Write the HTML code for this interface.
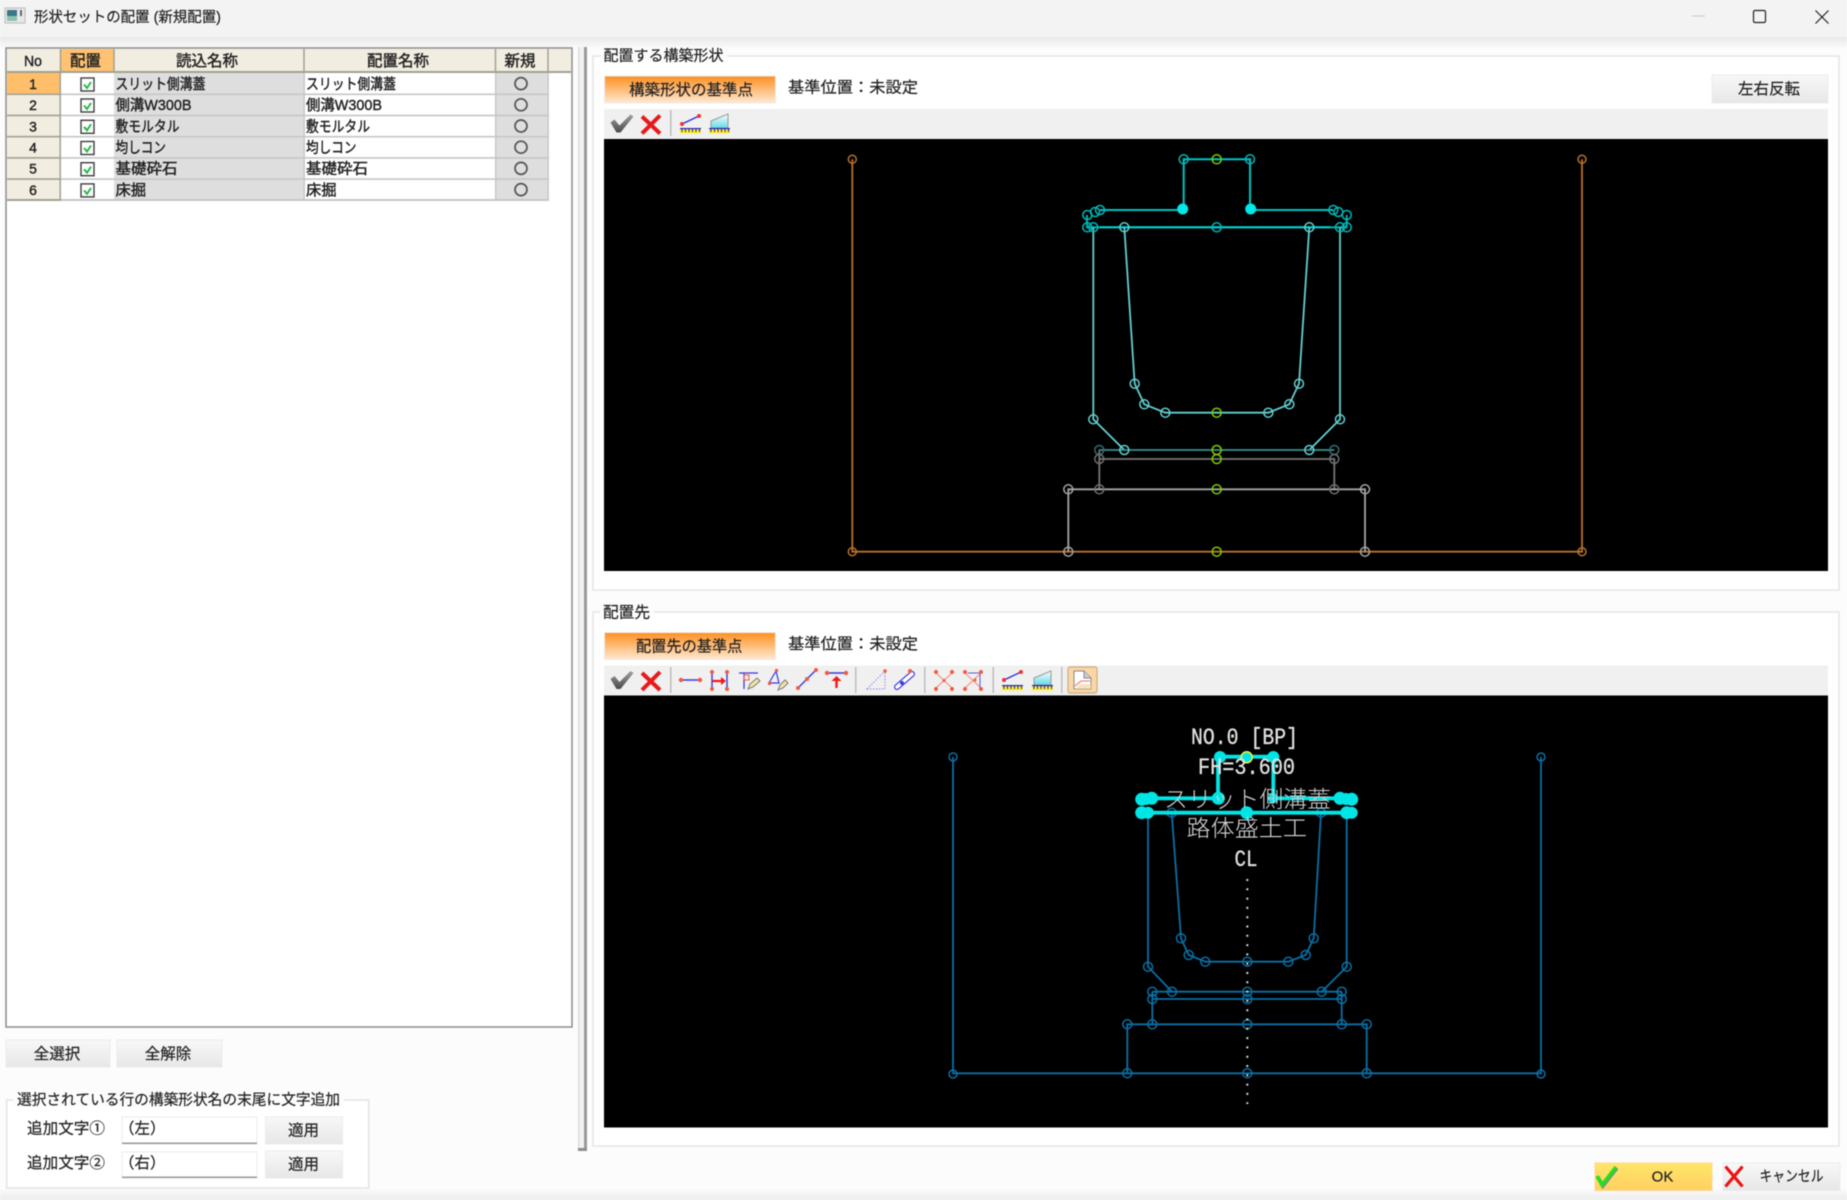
<!DOCTYPE html>
<html lang="ja">
<head>
<meta charset="utf-8">
<title>形状セットの配置 (新規配置)</title>
<style>
html,body{margin:0;padding:0;width:1847px;height:1200px;overflow:hidden;background:#fcfcfc}
svg{display:block;filter:blur(.5px)}
text{font-family:"Liberation Sans","Noto Sans CJK JP",sans-serif;fill:#222;stroke:#222;stroke-width:.2}
.c{text-anchor:middle}
.b text{stroke-width:.4}
.cad text{font-family:"Liberation Mono","Noto Sans CJK JP",monospace;fill:#e2e2e2;stroke:#e2e2e2;stroke-width:.3;font-size:23px}
.cad text.j{stroke:none;font-weight:300}
.n circle{fill:none;stroke-width:1.5}
</style>
</head>
<body>
<svg width="1847" height="1200" viewBox="0 0 1847 1200" xmlns="http://www.w3.org/2000/svg">
<defs>
<linearGradient id="sh" x1="0" y1="0" x2="0" y2="1"><stop offset="0" stop-color="#e9e9e9"/><stop offset="1" stop-color="#fcfcfc"/></linearGradient>
<linearGradient id="bt" x1="0" y1="0" x2="0" y2="1"><stop offset="0" stop-color="#fcfcfc"/><stop offset="1" stop-color="#ececec"/></linearGradient>
<linearGradient id="or" x1="0" y1="0" x2="0" y2="1"><stop offset="0" stop-color="#ff8f1f"/><stop offset="1" stop-color="#ffe9d2"/></linearGradient>
<linearGradient id="gb" x1="0" y1="0" x2="0" y2="1"><stop offset="0" stop-color="#f8f8f8"/><stop offset="1" stop-color="#e7e7e7"/></linearGradient>
<linearGradient id="ok" x1="0" y1="0" x2="0" y2="1"><stop offset="0" stop-color="#ffe668"/><stop offset="1" stop-color="#ffcf62"/></linearGradient>
<linearGradient id="gc" x1="0" y1="0" x2="0" y2="1"><stop offset="0" stop-color="#a0a0a0"/><stop offset="1" stop-color="#4a4a4a"/></linearGradient>
<linearGradient id="sl" x1="0" y1="0" x2="0" y2="1"><stop offset="0" stop-color="#ffffff"/><stop offset="1" stop-color="#63dbe8"/></linearGradient>
</defs>

<!-- background / title -->
<rect width="1847" height="1200" fill="#fcfcfc"/>
<rect width="1847" height="37" fill="#f3f3f3"/>
<rect y="37" width="1847" height="12" fill="url(#sh)"/>
<rect y="1188" width="1847" height="12" fill="url(#bt)"/>
<rect x="5" y="8" width="20" height="15" fill="#e8e8e8" stroke="#bbb"/>
<rect x="7" y="10" width="10" height="11" fill="#3a7888"/>
<rect x="7" y="16" width="10" height="5" fill="#8cc0b0"/>
<rect x="20" y="10" width="2" height="6" fill="#666"/>
<text x="34" y="22" font-size="14.5" textLength="187" lengthAdjust="spacingAndGlyphs">形状セットの配置 (新規配置)</text>
<line x1="1692" y1="16" x2="1705" y2="16" stroke="#c8c8c8" stroke-width="1"/>
<rect x="1753.5" y="10.5" width="12" height="12" rx="1.5" fill="none" stroke="#222" stroke-width="1.2"/>
<path d="M1815.5 10.5L1828.5 23.5M1828.5 10.5L1815.5 23.5" stroke="#222" stroke-width="1.2" fill="none"/>

<!-- table -->
<rect x="6" y="48" width="566" height="979" fill="#fff" stroke="#8c8c8c" stroke-width="1.5"/>
<rect x="7" y="49" width="564" height="23" fill="#f1ede1"/>
<rect x="60.5" y="49" width="53" height="23" fill="#ffc272"/>
<rect x="7" y="71" width="564" height="2" fill="#a3a191"/>
<g stroke="#a3a191" stroke-width="1.5"><line x1="60.5" y1="49" x2="60.5" y2="72"/><line x1="114" y1="49" x2="114" y2="72"/><line x1="304" y1="49" x2="304" y2="72"/><line x1="495.5" y1="49" x2="495.5" y2="72"/><line x1="548" y1="49" x2="548" y2="72"/></g>
<g class="b">
<text x="33" y="66" font-size="14.5" class="c" textLength="18" lengthAdjust="spacingAndGlyphs">No</text>
<text x="85.500" y="66" font-size="15.5" class="c">配置</text>
<text x="207" y="66" font-size="15.5" class="c">読込名称</text>
<text x="398" y="66" font-size="15.5" class="c">配置名称</text>
<text x="520" y="66" font-size="15.5" class="c">新規</text>
</g>

<!-- rows -->
<rect x="7" y="73" width="53" height="127" fill="#f1ede1"/>
<rect x="7" y="73" width="53" height="21" fill="#ffbe6a"/>
<rect x="114" y="73" width="190" height="127" fill="#dedede"/>
<rect x="496" y="73" width="52" height="127" fill="#dedede"/>
<g fill="#c6c6c6">
<rect x="7" y="93.5" width="541" height="1.6"/><rect x="7" y="114.7" width="541" height="1.6"/><rect x="7" y="135.9" width="541" height="1.6"/><rect x="7" y="157.1" width="541" height="1.6"/><rect x="7" y="178.3" width="541" height="1.6"/><rect x="7" y="199" width="541" height="2"/>
<rect x="303.5" y="73" width="1.4" height="127"/><rect x="495" y="73" width="1.4" height="127"/><rect x="547.5" y="73" width="1.4" height="128"/>
</g>
<rect x="59.5" y="73" width="1.5" height="128" fill="#a3a191"/>
<rect x="7" y="199" width="53" height="2" fill="#a3a191"/>
<rect x="7" y="93.5" width="53" height="1.5" fill="#a3a191"/><rect x="7" y="114.7" width="53" height="1.5" fill="#a3a191"/><rect x="7" y="135.9" width="53" height="1.5" fill="#a3a191"/><rect x="7" y="157.1" width="53" height="1.5" fill="#a3a191"/><rect x="7" y="178.3" width="53" height="1.5" fill="#a3a191"/>

<g class="b">
<text x="33" y="89" class="c" font-size="14">1</text><text x="33" y="110" class="c" font-size="14">2</text><text x="33" y="131.5" class="c" font-size="14">3</text><text x="33" y="152.5" class="c" font-size="14">4</text><text x="33" y="173.5" class="c" font-size="14">5</text><text x="33" y="195" class="c" font-size="14">6</text>
</g>
<g fill="#fff" stroke="#3c3c3c" stroke-width="1.4">
<rect x="81" y="78" width="13" height="13"/><rect x="81" y="99" width="13" height="13"/><rect x="81" y="120.3" width="13" height="13"/><rect x="81" y="141.5" width="13" height="13"/><rect x="81" y="162.7" width="13" height="13"/><rect x="81" y="183.9" width="13" height="13"/>
</g>
<g fill="none" stroke="#28b84a" stroke-width="2">
<path d="M84 84.5l3 3.5l4-6"/><path d="M84 105.5l3 3.5l4-6"/><path d="M84 126.8l3 3.5l4-6"/><path d="M84 148l3 3.5l4-6"/><path d="M84 169.2l3 3.5l4-6"/><path d="M84 190.4l3 3.5l4-6"/>
</g>
<g fill="none" stroke="#555" stroke-width="1.7">
<circle cx="521" cy="83.6" r="6"/><circle cx="521" cy="104.8" r="6"/><circle cx="521" cy="126" r="6"/><circle cx="521" cy="147.2" r="6"/><circle cx="521" cy="168.4" r="6"/><circle cx="521" cy="189.6" r="6"/>
</g>
<g font-size="14.8" class="b">
<text x="115.500" y="89" textLength="90" lengthAdjust="spacingAndGlyphs">スリット側溝蓋</text>
<text x="115.500" y="110" textLength="76" lengthAdjust="spacingAndGlyphs">側溝W300B</text>
<text x="115.500" y="131.5" textLength="64" lengthAdjust="spacingAndGlyphs">敷モルタル</text>
<text x="115.500" y="152.5" textLength="50.5" lengthAdjust="spacingAndGlyphs">均しコン</text>
<text x="115.500" y="173.5" textLength="62" lengthAdjust="spacingAndGlyphs">基礎砕石</text>
<text x="115.500" y="195" textLength="30.6" lengthAdjust="spacingAndGlyphs">床掘</text>
<text x="306" y="89" textLength="90" lengthAdjust="spacingAndGlyphs">スリット側溝蓋</text>
<text x="306" y="110" textLength="76" lengthAdjust="spacingAndGlyphs">側溝W300B</text>
<text x="306" y="131.5" textLength="64" lengthAdjust="spacingAndGlyphs">敷モルタル</text>
<text x="306" y="152.5" textLength="50.5" lengthAdjust="spacingAndGlyphs">均しコン</text>
<text x="306" y="173.5" textLength="62" lengthAdjust="spacingAndGlyphs">基礎砕石</text>
<text x="306" y="195" textLength="30.6" lengthAdjust="spacingAndGlyphs">床掘</text>
</g>

<!-- bottom-left controls -->
<rect x="6" y="1040" width="104" height="27" fill="url(#gb)" stroke="#ececec"/>
<rect x="117" y="1040" width="105" height="27" fill="url(#gb)" stroke="#ececec"/>
<text x="57" y="1059" font-size="15.5" class="c">全選択</text>
<text x="168" y="1059" font-size="15.5" class="c">全解除</text>
<rect x="6.7" y="1100" width="362" height="88" fill="#fff" stroke="#e2e2e2" stroke-width="1.4"/>
<rect x="13" y="1092" width="331" height="14" fill="#fcfcfc"/>
<text x="17" y="1104.5" font-size="14.7" textLength="323" lengthAdjust="spacingAndGlyphs">選択されている行の構築形状名の末尾に文字追加</text>
<text x="27" y="1133.5" font-size="15.5" textLength="78" lengthAdjust="spacingAndGlyphs">追加文字①</text>
<text x="27" y="1168" font-size="15.5" textLength="78" lengthAdjust="spacingAndGlyphs">追加文字②</text>
<rect x="122" y="1117" width="135" height="27" fill="#fff" stroke="#ededed"/>
<rect x="122" y="1142.5" width="135" height="1.5" fill="#999"/>
<rect x="122" y="1152" width="135" height="26" fill="#fff" stroke="#ededed"/>
<rect x="122" y="1176.5" width="135" height="1.5" fill="#999"/>
<text x="119" y="1133.5" font-size="15.5">（左）</text>
<text x="119" y="1168" font-size="15.5">（右）</text>
<rect x="265.500" y="1117" width="77" height="27" fill="url(#gb)" stroke="#ececec"/>
<rect x="265.500" y="1151" width="77" height="27" fill="url(#gb)" stroke="#ececec"/>
<text x="303.5" y="1135.5" font-size="15.5" class="c">適用</text>
<text x="303.5" y="1169.5" font-size="15.5" class="c">適用</text>

<!-- splitter -->
<rect x="578" y="47" width="1.5" height="1103" fill="#dcdcdc"/>
<rect x="579.5" y="47" width="5" height="1101" fill="#f2f2f2"/>
<rect x="584" y="47" width="3" height="1104" fill="#9a9a9a"/>
<rect x="578" y="1148" width="9" height="3" fill="#8e8e8e"/>

<!-- upper panel -->
<rect x="593" y="56" width="1246" height="534" fill="#fff" stroke="#e6e6e6" stroke-width="1.6"/>
<rect x="601" y="48" width="126" height="14" fill="#fcfcfc"/>
<text x="603.500" y="60.5" font-size="15" textLength="120" lengthAdjust="spacingAndGlyphs">配置する構築形状</text>
<rect x="604.500" y="76" width="171" height="27" fill="url(#or)" stroke="#ececec"/>
<text x="629" y="95" font-size="15.2" textLength="124" lengthAdjust="spacingAndGlyphs">構築形状の基準点</text>
<text x="788" y="92.5" font-size="15.5" textLength="130" lengthAdjust="spacingAndGlyphs">基準位置：未設定</text>
<rect x="1712" y="75" width="116" height="28" fill="url(#gb)" stroke="#ececec"/>
<text x="1769" y="94" font-size="15.5" class="c">左右反転</text>
<rect x="604" y="109" width="1224" height="30" fill="#f0f0f0"/>
<rect x="604" y="139" width="1224" height="432" fill="#000"/>

<!-- lower panel -->
<rect x="593" y="612" width="1246" height="534" fill="#fff" stroke="#e6e6e6" stroke-width="1.6"/>
<rect x="600" y="604" width="54" height="14" fill="#fcfcfc"/>
<text x="603" y="617.5" font-size="15.5" textLength="47" lengthAdjust="spacingAndGlyphs">配置先</text>
<rect x="604.500" y="632.5" width="171" height="27" fill="url(#or)" stroke="#ececec"/>
<text x="636" y="651.5" font-size="15.2">配置先の基準点</text>
<text x="788" y="649" font-size="15.5" textLength="130" lengthAdjust="spacingAndGlyphs">基準位置：未設定</text>
<rect x="604" y="665.5" width="1224" height="30" fill="#f0f0f0"/>
<rect x="604" y="695.5" width="1224" height="432" fill="#000"/>

<!-- OK / cancel -->
<rect x="1595" y="1163" width="117" height="27.500" fill="url(#ok)" stroke="#ffd79a"/>
<path d="M1597 1176l5 9l14-18" fill="none" stroke="#888" stroke-width="3.5" transform="translate(1 1)"/>
<path d="M1597 1176l5 9l14-18" fill="none" stroke="#22e022" stroke-width="3.5"/>
<text x="1662.500" y="1181.5" font-size="15" class="c">OK</text>
<rect x="1723" y="1163" width="117" height="27.500" fill="url(#gb)" stroke="#ececec"/>
<path d="M1725.500 1166.500l17 20M1742.500 1166.500l-17 20" stroke="#ee1111" stroke-width="3.2" fill="none"/>
<text x="1759.500" y="1181" font-size="15" textLength="64" lengthAdjust="spacingAndGlyphs">キャンセル</text>

<!-- Upper toolbar icons -->
<polygon points="610.500,122.500 614.500,119.500 619.500,125.500 630.500,114.500 633.500,116.500 620.500,132.500 616.500,132.500" fill="url(#gc)"/>
<path d="M642 116.500l18 17M660 115.500l-18 18" stroke="#e61a1a" stroke-width="4" fill="none"/>
<rect x="670" y="110" width="1.5" height="26" fill="#bdbdbd"/>
<path d="M682 124L699 116" stroke="#2a2ae0" stroke-width="1.3"/>
<circle cx="682" cy="124" r="2" fill="#f03030"/><circle cx="699" cy="116" r="2" fill="#f03030"/>
<rect x="680" y="128" width="21" height="1.3" fill="#2222cc"/>
<rect x="680" y="129.3" width="21" height="4" fill="#ffee22"/>
<path d="M682 129v3M685.500 129v3M689 129v3M692.500 129v3M696 129v3M699.500 129v3" stroke="#2222aa" stroke-width="1"/>
<polygon points="711,121 728,114 728,128 711,128" fill="url(#sl)" stroke="#999"/>
<rect x="709" y="128" width="21" height="1.3" fill="#2222cc"/>
<rect x="709" y="129.3" width="21" height="4" fill="#ffee22"/>
<path d="M711 129v3M714.500 129v3M718 129v3M721.500 129v3M725 129v3M728.500 129v3" stroke="#2222aa" stroke-width="1"/>

<!-- Lower toolbar icons -->
<polygon points="610.500,679 614.500,676 619.500,682 630.500,671 633.500,673 620.500,689 616.500,689" fill="url(#gc)"/>
<path d="M642 673l18 17M660 672l-18 18" stroke="#e61a1a" stroke-width="4" fill="none"/>
<rect x="670" y="667" width="1.5" height="26" fill="#bdbdbd"/>
<!-- line -->
<path d="M681 680H700" stroke="#3a3ae0" stroke-width="1.4"/><circle cx="681" cy="680" r="2.200" fill="#f25a40"/><circle cx="700" cy="680" r="2.200" fill="#f25a40"/>
<!-- H arrow -->
<path d="M712 672V689M727 672V689" stroke="#3a3ae0" stroke-width="1.4"/>
<path d="M712 681H723" stroke="#f01818" stroke-width="2.200"/><path d="M721 677l5 4l-5 4z" fill="#f01818"/>
<circle cx="712" cy="672" r="2" fill="#f25a40"/><circle cx="712" cy="689" r="2" fill="#f25a40"/><circle cx="727" cy="672" r="2" fill="#f25a40"/><circle cx="727" cy="689" r="2" fill="#f25a40"/>
<!-- T pencil -->
<path d="M739 673H758M744 673V689" stroke="#3a3ae0" stroke-width="1.3" fill="none"/><rect x="744" y="675" width="5" height="5" fill="none" stroke="#f25a40"/>
<path d="M748 689l2-5l7-6l3 3l-7 6z" fill="#f4e3a8" stroke="#777"/>
<!-- triangle pencil -->
<path d="M776 671L769 683H779z" fill="none" stroke="#3a3ae0" stroke-width="1.2"/><rect x="775" y="669" width="3" height="3" fill="#f25a40"/><rect x="768" y="682" width="3" height="3" fill="#f25a40"/>
<path d="M778 690l2-5l5-5l3 3l-5 5z" fill="#f4e3a8" stroke="#777"/>
<!-- diagonal -->
<path d="M798 688L816 670" stroke="#3a3ae0" stroke-width="1.400"/><circle cx="798" cy="688" r="2" fill="#f25a40"/><circle cx="807" cy="679" r="2" fill="#f25a40"/><circle cx="816" cy="670" r="2" fill="#f25a40"/>
<!-- arrow up -->
<path d="M827 673H846" stroke="#3a3ae0" stroke-width="1.4"/><circle cx="827" cy="673" r="2.200" fill="#f25a40"/><circle cx="846" cy="673" r="2.200" fill="#f25a40"/>
<path d="M836.500 688V680" stroke="#f01818" stroke-width="2.400"/><path d="M831.500 681l5-5l5 5z" fill="#f01818"/>
<rect x="855" y="667" width="1.5" height="26" fill="#bdbdbd"/>
<!-- dotted triangle -->
<path d="M867 689H885V671z" fill="none" stroke="#8a8ae8" stroke-width="1" stroke-dasharray="1.500 1.500"/><circle cx="885" cy="671" r="1.800" fill="#f25a40"/>
<!-- capsule -->
<path d="M897 687L912 674" stroke="#3a3ae0" stroke-width="6" stroke-linecap="round"/><path d="M897 687L912 674" stroke="#fff" stroke-width="3.600" stroke-linecap="round"/><circle cx="902" cy="683" r="2" fill="#3a3ae0"/><circle cx="910" cy="671" r="2" fill="#f25a40"/>
<rect x="924" y="667" width="1.5" height="26" fill="#bdbdbd"/>
<!-- X points -->
<path d="M936 673L952 688M952 673L936 688" stroke="#f58a7a" stroke-width="1.1"/><g fill="#f25a40"><circle cx="936" cy="672" r="2"/><circle cx="952" cy="672" r="2"/><circle cx="936" cy="689" r="2"/><circle cx="952" cy="689" r="2"/><circle cx="944" cy="680.500" r="1.500"/></g>
<path d="M965 673L981 688M981 673L965 688" stroke="#f58a7a" stroke-width="1.1"/><path d="M968 673H980V688" fill="none" stroke="#5a5ae0" stroke-width="1"/><g fill="#f25a40"><circle cx="965" cy="672" r="2"/><circle cx="981" cy="672" r="2"/><circle cx="965" cy="689" r="2"/><circle cx="981" cy="689" r="2"/><circle cx="975" cy="680" r="1.500"/></g>
<rect x="992.500" y="667" width="1.5" height="26" fill="#bdbdbd"/>
<!-- ground icons -->
<path d="M1004 680L1021 672" stroke="#2a2ae0" stroke-width="1.3"/><circle cx="1004" cy="680" r="2" fill="#f03030"/><circle cx="1021" cy="672" r="2" fill="#f03030"/>
<rect x="1002" y="685" width="21" height="1.3" fill="#2222cc"/><rect x="1002" y="686.300" width="21" height="4" fill="#ffee22"/>
<path d="M1004 686v3M1007.500 686v3M1011 686v3M1014.500 686v3M1018 686v3M1021.500 686v3" stroke="#2222aa" stroke-width="1"/>
<polygon points="1034,678 1051,671 1051,685 1034,685" fill="url(#sl)" stroke="#999"/>
<rect x="1032" y="685" width="21" height="1.3" fill="#2222cc"/><rect x="1032" y="686.300" width="21" height="4" fill="#ffee22"/>
<path d="M1034 686v3M1037.500 686v3M1041 686v3M1044.500 686v3M1048 686v3M1051.500 686v3" stroke="#2222aa" stroke-width="1"/>
<rect x="1061" y="667" width="1.5" height="26" fill="#bdbdbd"/>
<!-- doc button -->
<rect x="1068" y="667" width="29" height="26" rx="2" fill="#fbd7a5" stroke="#d0b48e" stroke-width="1.400"/>
<path d="M1074 671H1084L1091 678V689H1074z" fill="#fff" stroke="#888"/>
<path d="M1084 671V678H1091" fill="#ccd" stroke="#888"/>
<path d="M1075 686L1081 681H1090" fill="none" stroke="#ee8a7a" stroke-width="1.300"/>
<path d="M1075 689L1080 684H1091V689z" fill="#f6d9b0" opacity=".8"/>

<!-- Upper CAD drawing -->
<g fill="none" stroke-width="1.800">
<path d="M852.300 159.300V551.700H1582V159.300" stroke="#b8722c"/>
<path d="M1100 210H1183M1183.700 210V159.300H1250V210M1250 210H1333" stroke="#00c4c4" stroke-width="2"/>
<path d="M1087 215V227.300H1346.700V215" stroke="#00bcbc"/>
<path d="M1100 227.300H1330" stroke="#00d2d2" stroke-width="2"/>
<path d="M1093.300 227.300V419.300L1124.300 450M1340 227.300V419.300L1309.300 450" stroke="#62cfcf"/>
<path d="M1124.300 227.300L1134.700 383.700L1144.300 404.300L1165.300 412.700H1268.300L1289.300 404.300L1299 383.700L1309.300 227.300" stroke="#62cfcf"/>
<path d="M1099.300 450H1334.300" stroke="#3d8f8f"/>
<path d="M1099.300 459H1334.300V489.300M1099.300 450V489.300" stroke="#777"/>
<path d="M1068.300 551.700V489.300H1365V551.700" stroke="#a5a5a5"/>
</g>
<g class="n">
<g stroke="#b8722c"><circle cx="852.300" cy="159.300" r="4"/><circle cx="1582" cy="159.300" r="4"/><circle cx="852.300" cy="551.700" r="4"/><circle cx="1582" cy="551.700" r="4"/></g>
<g stroke="#00b8b8"><circle cx="1183.700" cy="159.300" r="4.500"/><circle cx="1250" cy="159.300" r="4.500"/><circle cx="1100" cy="210" r="4.500"/><circle cx="1095" cy="212" r="4.500"/><circle cx="1087.300" cy="215" r="4.500"/><circle cx="1333.300" cy="210" r="4.500"/><circle cx="1338.300" cy="212" r="4.500"/><circle cx="1346.700" cy="215" r="4.500"/><circle cx="1087.300" cy="227.300" r="4.500"/><circle cx="1346.700" cy="227.300" r="4.500"/><circle cx="1093.300" cy="227.300" r="4.500"/><circle cx="1340" cy="227.300" r="4.500"/><circle cx="1216.700" cy="227.300" r="4.500"/></g>
<g stroke="#62cfcf"><circle cx="1124.300" cy="227.300" r="4.500"/><circle cx="1309.300" cy="227.300" r="4.500"/><circle cx="1134.700" cy="383.700" r="4.500"/><circle cx="1144.300" cy="404.300" r="4.500"/><circle cx="1165.300" cy="412.700" r="4.500"/><circle cx="1268.300" cy="412.700" r="4.500"/><circle cx="1289.300" cy="404.300" r="4.500"/><circle cx="1299" cy="383.700" r="4.500"/><circle cx="1093.300" cy="419.300" r="4.500"/><circle cx="1340" cy="419.300" r="4.500"/><circle cx="1124.300" cy="450" r="4.500"/><circle cx="1309.300" cy="450" r="4.500"/></g>
<g stroke="#2e6e6e"><circle cx="1099.300" cy="450" r="4.500"/><circle cx="1334.300" cy="450" r="4.500"/></g>
<g stroke="#6f6f6f"><circle cx="1099.300" cy="459" r="4.500"/><circle cx="1334.300" cy="459" r="4.500"/><circle cx="1099.300" cy="489.300" r="4.500"/><circle cx="1334.300" cy="489.300" r="4.500"/></g>
<g stroke="#a5a5a5"><circle cx="1068.300" cy="489.300" r="4.500"/><circle cx="1365" cy="489.300" r="4.500"/><circle cx="1068.300" cy="551.700" r="4.500"/><circle cx="1365" cy="551.700" r="4.500"/></g>
<g stroke="#7ccc00"><circle cx="1216.700" cy="159.300" r="4.500"/><circle cx="1216.700" cy="412.700" r="4.500"/><circle cx="1216.700" cy="450" r="4.500"/><circle cx="1216.700" cy="459" r="4.500"/><circle cx="1216.700" cy="489.300" r="4.500"/><circle cx="1216.700" cy="551.700" r="4.500"/></g>
</g>
<circle cx="1182.700" cy="209" r="5.500" fill="#00e8e8"/><circle cx="1250.700" cy="209" r="5.500" fill="#00e8e8"/>

<!-- Lower CAD drawing -->
<g fill="none" stroke="#0a6fa5" stroke-width="1.800">
<path d="M953 757V1073.300H1541V757"/>
<path d="M1148 812.700V966.700L1172 991.700M1346.700 812.700V966.700L1321.700 991.700"/>
<path d="M1171.700 812.700L1181 938.300L1188.700 955L1205.300 961.700H1288.300L1305.700 955L1313.700 938.300L1321 812.700"/>
<path d="M1152.300 991.700H1341.700M1152.300 999H1341.700M1152.300 991.700V1024.300M1341.700 991.700V1024.300"/>
<path d="M1127.300 1073.300V1024.300H1366.700V1073.300"/>
</g>
<g class="n" stroke="#0a6fa5">
<circle cx="953" cy="757" r="4"/><circle cx="1541" cy="757" r="4"/><circle cx="1171.700" cy="812.700" r="4.500"/><circle cx="1321" cy="812.700" r="4.500"/><circle cx="1181" cy="938.300" r="4.500"/><circle cx="1188.700" cy="955" r="4.500"/><circle cx="1205.300" cy="961.700" r="4.500"/><circle cx="1247.300" cy="961.700" r="4.500"/><circle cx="1288.300" cy="961.700" r="4.500"/><circle cx="1305.700" cy="955" r="4.500"/><circle cx="1313.700" cy="938.300" r="4.500"/><circle cx="1148" cy="966.700" r="4.500"/><circle cx="1346.700" cy="966.700" r="4.500"/><circle cx="1172" cy="991.700" r="4.500"/><circle cx="1321.700" cy="991.700" r="4.500"/><circle cx="1152.300" cy="991.700" r="4.500"/><circle cx="1341.700" cy="991.700" r="4.500"/><circle cx="1152.300" cy="999" r="4.500"/><circle cx="1341.700" cy="999" r="4.500"/><circle cx="1247.300" cy="991.700" r="4.500"/><circle cx="1247.300" cy="999" r="4.500"/><circle cx="1127.300" cy="1024.300" r="4.500"/><circle cx="1152.300" cy="1024.300" r="4.500"/><circle cx="1247.300" cy="1024.300" r="4.500"/><circle cx="1341.700" cy="1024.300" r="4.500"/><circle cx="1366.700" cy="1024.300" r="4.500"/><circle cx="1127.300" cy="1073.300" r="4.500"/><circle cx="1247.300" cy="1073.300" r="4.500"/><circle cx="1366.700" cy="1073.300" r="4.500"/><circle cx="953" cy="1074" r="4"/><circle cx="1541" cy="1074" r="4"/>
</g>
<path d="M1247.300 879V1104" stroke="#d8d8d8" stroke-width="2" stroke-dasharray="2 7.300" fill="none"/>
<g fill="none" stroke="#00e6e6" stroke-width="3.800">
<path d="M1143 798.300H1218V756.700H1273.300V798.300H1350"/>
<path d="M1141.700 812.700H1351.700"/>
</g>
<g fill="#00e6e6">
<circle cx="1220" cy="757" r="6"/><circle cx="1273.300" cy="757" r="6"/><circle cx="1141.700" cy="799.300" r="6.500"/><circle cx="1146" cy="799" r="6"/><circle cx="1151.700" cy="798.300" r="6.500"/><circle cx="1218.300" cy="798.300" r="6.500"/><circle cx="1273" cy="798.300" r="5"/><circle cx="1340" cy="798.300" r="6.500"/><circle cx="1346" cy="799" r="6"/><circle cx="1351.700" cy="799.300" r="6.500"/><circle cx="1141.700" cy="812.700" r="6.500"/><circle cx="1148" cy="812.700" r="6"/><circle cx="1246.700" cy="812.700" r="6.500"/><circle cx="1346.700" cy="812.700" r="6.500"/><circle cx="1351.700" cy="812.700" r="6"/>
</g>
<circle cx="1246.700" cy="757.300" r="5.500" fill="#00e6e6" stroke="#f2f23a" stroke-width="1.500"/>
<g class="cad">
<text x="1191" y="744" textLength="107" lengthAdjust="spacingAndGlyphs">NO.0 [BP]</text>
<text x="1198" y="774" textLength="97" lengthAdjust="spacingAndGlyphs">FH=3.600</text>
<text class="j" x="1164" y="807" textLength="167" lengthAdjust="spacingAndGlyphs" style="fill:#d0d0d0">スリット側溝蓋</text>
<text class="j" x="1186.500" y="836" textLength="120.500" lengthAdjust="spacingAndGlyphs" style="fill:#d8d8d8">路体盛土工</text>
<text x="1234.500" y="866" textLength="23" lengthAdjust="spacingAndGlyphs">CL</text>
</g>
</svg>
</body>
</html>
